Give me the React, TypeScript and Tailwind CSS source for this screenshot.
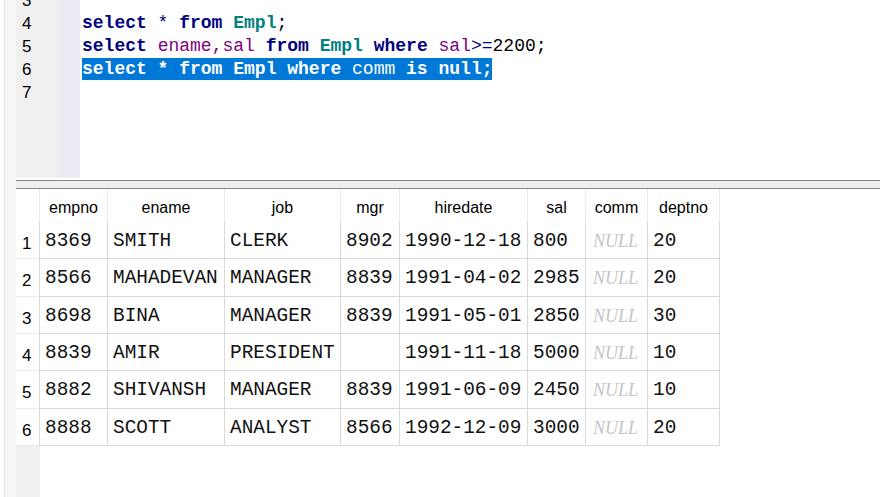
import React from 'react';

const mono = { fontFamily: '"Liberation Mono", "Courier New", monospace' };
const sans = { fontFamily: '"Liberation Sans", Arial, sans-serif' };
const serif = { fontFamily: '"Liberation Serif", "Times New Roman", serif' };

const columns = [
  { name: 'empno', w: 'w-[68px]' },
  { name: 'ename', w: 'w-[117px]' },
  { name: 'job', w: 'w-[116px]' },
  { name: 'mgr', w: 'w-[59px]' },
  { name: 'hiredate', w: 'w-[128px]' },
  { name: 'sal', w: 'w-[58px]' },
  { name: 'comm', w: 'w-[62px]' },
  { name: 'deptno', w: 'w-[72px]' },
];

const rows: (string | null)[][] = [
  ['8369', 'SMITH', 'CLERK', '8902', '1990-12-18', '800', null, '20'],
  ['8566', 'MAHADEVAN', 'MANAGER', '8839', '1991-04-02', '2985', null, '20'],
  ['8698', 'BINA', 'MANAGER', '8839', '1991-05-01', '2850', null, '30'],
  ['8839', 'AMIR', 'PRESIDENT', '', '1991-11-18', '5000', null, '10'],
  ['8882', 'SHIVANSH', 'MANAGER', '8839', '1991-06-09', '2450', null, '10'],
  ['8888', 'SCOTT', 'ANALYST', '8566', '1992-12-09', '3000', null, '20'],
];

function Kw({ children }: { children: React.ReactNode }) {
  return <span className="font-bold text-[#000080]">{children}</span>;
}
function Tbl({ children }: { children: React.ReactNode }) {
  return <span className="font-bold text-[#008080]">{children}</span>;
}
function Col({ children }: { children: React.ReactNode }) {
  return <span className="font-normal text-[#800080]">{children}</span>;
}

function Editor() {
  const nums = ['3', '4', '5', '6', '7'];
  return (
    <div className="h-[178px] flex overflow-hidden">
      <div className="w-[43px] shrink-0 bg-[#f0f0f0] pl-[6px]" style={sans}>
        <div className="-mt-[11px]">
          {nums.map((n) => (
            <div key={n} className="h-[23px] leading-[23px] text-[17px] text-black">
              {n}
            </div>
          ))}
        </div>
      </div>
      <div className="w-[21px] shrink-0 bg-[#ebebf3]" />
      <div className="flex-1 bg-white pl-[2px] text-[18px] whitespace-pre" style={mono}>
        <div className="-mt-[11px]">
          <div className="h-[23px]" />
          <div className="h-[23px] leading-[23px]">
            <Kw>select</Kw>
            <span className="text-[#000080]"> * </span>
            <Kw>from</Kw> <Tbl>Empl</Tbl>
            <span className="text-black">;</span>
          </div>
          <div className="h-[23px] leading-[23px]">
            <Kw>select</Kw> <Col>ename,sal</Col> <Kw>from</Kw> <Tbl>Empl</Tbl> <Kw>where</Kw>{' '}
            <Col>sal</Col>
            <span className="text-[#000080]">&gt;=</span>
            <span className="text-black">2200;</span>
          </div>
          <div className="h-[23px] leading-[23px]">
            <span className="inline-block h-[22px] leading-[22px] bg-[#0078d7] text-white">
              <span className="font-bold">select * from Empl where </span>
              <span className="font-normal">comm</span>
              <span className="font-bold"> is null;</span>
            </span>
          </div>
        </div>
      </div>
    </div>
  );
}

function Results() {
  return (
    <div className="flex-1 flex flex-col bg-white">
      <div className="flex h-[33px]" style={sans}>
        <div className="w-[24px] shrink-0 border-r border-[#ebebeb]" />
        {columns.map((c) => (
          <div
            key={c.name}
            className={`${c.w} shrink-0 border-r border-[#ebebeb] flex items-center justify-center text-[16px] text-black pt-[4px]`}
          >
            {c.name}
          </div>
        ))}
      </div>
      {rows.map((r, i) => (
        <div key={i} className="flex h-[37.33px]">
          <div
            className="w-[24px] shrink-0 border-r border-b border-r-[#d9d9d9] border-b-[#ebebeb] flex items-center pl-[6px] pt-[7px] text-[17px] text-black"
            style={sans}
          >
            {i + 1}
          </div>
          {r.map((v, j) => (
            <div
              key={j}
              className={`${columns[j].w} shrink-0 border-r border-b border-[#d9d9d9] flex items-center pl-[5px] pt-[3px] whitespace-nowrap overflow-hidden`}
            >
              {v === null ? (
                <span className="italic text-[18px] text-[#c4c4c4] pl-[2px]" style={serif}>
                  NULL
                </span>
              ) : (
                <span className="text-[19.4px] text-[#111]" style={mono}>
                  {v}
                </span>
              )}
            </div>
          ))}
        </div>
      ))}
      <div className="flex-1 flex">
        <div className="w-[24px] shrink-0 bg-[#f0f0f0]" />
      </div>
    </div>
  );
}

export default function App() {
  return (
    <div className="w-[880px] h-[497px] flex bg-white overflow-hidden">
      <div className="w-[16px] shrink-0 flex">
        <div className="w-[4px] bg-white" />
        <div className="w-[1px] bg-[#e3e3e3]" />
        <div className="flex-1 bg-[#f7f7f7]" />
      </div>
      <div className="flex-1 flex flex-col">
        <Editor />
        <div className="h-[2px] bg-white" />
        <div className="h-[9px] bg-[#efefef] border-t border-b border-[#858585]" />
        <Results />
      </div>
    </div>
  );
}
